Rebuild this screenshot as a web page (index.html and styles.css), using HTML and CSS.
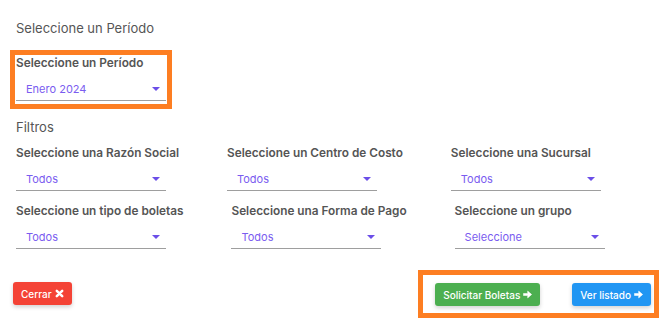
FILE: index.html
```html
<!doctype html>
<html lang="es">
    <head>
        <meta charset="UTF-8" />
        <meta name="viewport" content="width=device-width, initial-scale=1.0" />
        <title>Solicitar Boletas</title>
        <link rel="stylesheet" href="styles.css">
    </head>
    <body>
        <div class="page">
            <h2 class="section-title">Seleccione un Período</h2>

            <div class="period-box">
                <div class="field">
                    <label class="field-label">Seleccione un Período</label>
                    <div class="select">
                        <span class="select-value">Enero 2024</span>
                        <span class="caret"></span>
                    </div>
                </div>
            </div>

            <h2 class="section-title filters-title">Filtros</h2>

            <div class="filter-row">
                <div class="field">
                    <label class="field-label">Seleccione una Razón Social</label>
                    <div class="select">
                        <span class="select-value">Todos</span>
                        <span class="caret"></span>
                    </div>
                </div>
                <div class="field">
                    <label class="field-label">Seleccione un Centro de Costo</label>
                    <div class="select">
                        <span class="select-value">Todos</span>
                        <span class="caret"></span>
                    </div>
                </div>
                <div class="field">
                    <label class="field-label">Seleccione una Sucursal</label>
                    <div class="select">
                        <span class="select-value">Todos</span>
                        <span class="caret"></span>
                    </div>
                </div>
            </div>

            <div class="filter-row second">
                <div class="field">
                    <label class="field-label">Seleccione un tipo de boletas</label>
                    <div class="select">
                        <span class="select-value">Todos</span>
                        <span class="caret"></span>
                    </div>
                </div>
                <div class="field">
                    <label class="field-label">Seleccione una Forma de Pago</label>
                    <div class="select">
                        <span class="select-value">Todos</span>
                        <span class="caret"></span>
                    </div>
                </div>
                <div class="field">
                    <label class="field-label">Seleccione un grupo</label>
                    <div class="select">
                        <span class="select-value">Seleccione</span>
                        <span class="caret"></span>
                    </div>
                </div>
            </div>

            <div class="actions">
                <button class="btn btn-red">
                    Cerrar
                    <svg class="btn-icon" viewBox="0 0 10 10">
                        <path d="M2 2 L8 8 M8 2 L2 8" stroke="currentColor" stroke-width="2.8" stroke-linecap="round" />
                    </svg>
                </button>

                <div class="actions-box">
                    <button class="btn btn-green">
                        Solicitar Boletas
                        <svg class="btn-icon" viewBox="0 0 10 10">
                            <path d="M0.5 3.9 H5.2 V1.2 L9.6 5 L5.2 8.8 V6.1 H0.5 Z" fill="currentColor" stroke="currentColor" stroke-width="0.6" stroke-linejoin="round" />
                        </svg>
                    </button>
                    <button class="btn btn-blue">
                        Ver listado
                        <svg class="btn-icon" viewBox="0 0 10 10">
                            <path d="M0.5 3.9 H5.2 V1.2 L9.6 5 L5.2 8.8 V6.1 H0.5 Z" fill="currentColor" stroke="currentColor" stroke-width="0.6" stroke-linejoin="round" />
                        </svg>
                    </button>
                </div>
            </div>
        </div>
    </body>
</html>
```

FILE: styles.css
```css
*,
*::before,
*::after {
    margin: 0;
    padding: 0;
    box-sizing: border-box;
}

:root {
    --text-color: #555;
    --value-color: #7a5cf0;
    --line-color: #9e9e9e;
    --highlight: #fd7e22;
}

body {
    font-family: Inter, "Noto Sans", sans-serif;
    background: #fff;
    color: var(--text-color);
    width: 672px;
}

.page {
    padding: 20px 13px 0 16px;
}

.section-title {
    font-size: 13px;
    line-height: 17px;
    font-weight: 400;
    color: var(--text-color);
}

/* Period selector, highlighted */
.period-box {
    display: inline-block;
    margin: 13px 0 0 -6px;
    border: 5px solid var(--highlight);
    padding: 0 1px 3px;
}

.filters-title {
    margin-top: 10px;
}

.field {
    width: max-content;
}

.field-label {
    display: block;
    font-size: 11.8px;
    line-height: 16px;
    font-weight: 600;
    color: var(--text-color);
    margin-bottom: 7px;
}

.select {
    width: 150px;
    height: 23px;
    display: flex;
    align-items: center;
    justify-content: space-between;
    padding: 0 6px 0 10px;
    border-bottom: 1px solid var(--line-color);
}

.select-value {
    font-size: 11px;
    color: var(--value-color);
}

.caret {
    width: 0;
    height: 0;
    border-left: 4px solid transparent;
    border-right: 4px solid transparent;
    border-top: 4px solid #6b4ee8;
}

/* Filters */
.filter-row {
    display: flex;
    gap: 48px;
    margin-top: 9px;
}

.filter-row.second {
    margin-top: 12px;
}

/* Buttons */
.actions {
    display: flex;
    justify-content: space-between;
    align-items: flex-start;
    margin: 21px 0 0 -3px;
}

.btn {
    font-family: inherit;
    font-size: 10px;
    font-weight: 500;
    color: #fff;
    border: none;
    border-radius: 3px;
    height: 23px;
    padding: 0 8px;
    display: inline-flex;
    align-items: center;
    gap: 3px;
    box-shadow: 0 2px 4px rgba(0, 0, 0, 0.18);
    cursor: pointer;
}

.btn-icon {
    width: 9px;
    height: 9px;
}

.btn-red {
    background: #f44336;
    margin-top: 12px;
}

.btn-green {
    background: #4caf50;
}

.btn-blue {
    background: #2196f3;
}

.actions-box {
    display: flex;
    gap: 32px;
    border: 5px solid var(--highlight);
    padding: 8px 3px 7px 12px;
}
```
